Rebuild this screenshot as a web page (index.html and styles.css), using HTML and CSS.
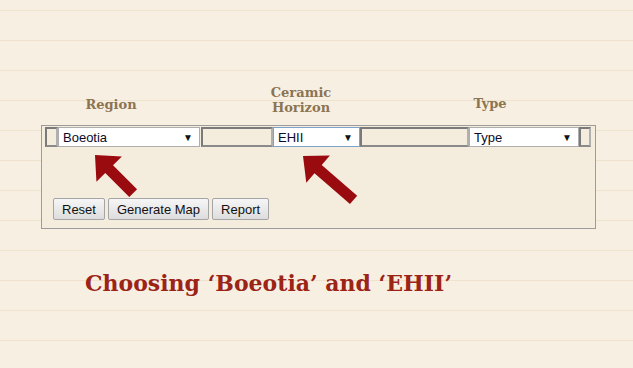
FILE: index.html
```html
<!DOCTYPE html>
<html lang="en">
<head>
    <meta charset="UTF-8">
    <title>Choosing Boeotia and EHII</title>
    <link rel="stylesheet" href="styles.css">
</head>
<body>
    <div class="sheet">
        <div class="labels">
            <div class="label label-region">Region</div>
            <div class="label label-horizon">
                <div>Ceramic</div>
                <div>Horizon</div>
            </div>
            <div class="label label-type">Type</div>
        </div>

        <div class="panel">
            <div class="filter-row">
                <div class="cell cell-edge"></div>
                <div class="picker picker-region">Boeotia<span class="caret">&#9660;</span></div>
                <div class="cell cell-gap1"></div>
                <div class="picker picker-horizon focused">EHII<span class="caret">&#9660;</span></div>
                <div class="cell cell-gap2"></div>
                <div class="picker picker-type">Type<span class="caret">&#9660;</span></div>
                <div class="cell cell-end"></div>
            </div>
            <div class="controls">
                <button>Reset</button>
                <button>Generate Map</button>
                <button>Report</button>
            </div>
        </div>

        <h2 class="caption">Choosing &lsquo;Boeotia&rsquo; and &lsquo;EHII&rsquo;</h2>
    </div>

    <!-- annotation arrows drawn over the form -->
    <svg class="arrows" width="633" height="368" viewBox="0 0 633 368">
        <g transform="translate(95,155) rotate(45)">
            <polygon points="0,0 20,-18 20,-5.5 54,-5.5 54,5.5 20,5.5 20,18"/>
        </g>
        <g transform="translate(303,156) rotate(41)">
            <polygon points="0,0 20,-18 20,-5.5 67,-5.5 67,5.5 20,5.5 20,18"/>
        </g>
    </svg>
</body>
</html>
```

FILE: styles.css
```css
body {
    margin: 0;
    min-height: 368px;
    background: repeating-linear-gradient(#f8efe3 0 10px, #efe3cd 10px 11px, #f8efe3 11px 30px);
    position: relative;
}
.sheet {
    margin: 0 0 0 41px;
    padding-top: 85px;
    width: 555px;
}
.labels {
    display: flex;
    align-items: flex-end;
    margin-bottom: 10px;
}
.label {
    font-family: "DejaVu Serif", serif;
    font-weight: bold;
    font-size: 13px;
    line-height: 15px;
    color: #8c7452;
    text-align: center;
}
.label-region {
    width: 140px;
    margin-bottom: 3px;
}
.label-horizon {
    width: 240px;
}
.label-type {
    width: 138px;
    margin-bottom: 4px;
}
.panel {
    border: 1px solid #9c9c9c;
    background: #f4ecdc;
    padding: 1px 3px 8px 3px;
}
.filter-row {
    display: flex;
    height: 20px;
}
.cell {
    box-sizing: border-box;
    height: 20px;
    border: 2px solid;
    border-color: #7a7a7a #b0b0b0 #8a8a8a #7a7a7a;
    background: #f4ecdc;
}
.cell-edge { width: 13px; }
.cell-gap1 { width: 72px; margin-left: 1px; }
.cell-gap2 { width: 109px; }
.cell-end { width: 12px; }
.picker {
    box-sizing: border-box;
    height: 20px;
    display: flex;
    align-items: center;
    justify-content: space-between;
    padding: 0 6px 0 4px;
    background: #fff;
    border: 1px solid #adadad;
    font-family: "Liberation Sans", Arial, sans-serif;
    font-size: 13px;
    color: #0b0b2a;
}
.picker-region { width: 142px; }
.picker-horizon { width: 87px; }
.picker-type { width: 110px; }
.focused {
    border-color: #7da2ce;
}
.caret {
    font-size: 10px;
    color: #111;
}
.controls {
    display: flex;
    gap: 3px;
    margin-top: 51px;
    padding-left: 8px;
}
button {
    height: 22px;
    padding: 0 8px;
    font-family: "Liberation Sans", Arial, sans-serif;
    font-size: 13px;
    color: #111;
    background: linear-gradient(#f6f6f6, #dddddd);
    border: 1px solid #a5a5a5;
    border-radius: 2px;
}
.caption {
    margin: 41px 0 0 44px;
    font-family: "DejaVu Serif", serif;
    font-weight: bold;
    font-size: 22px;
    line-height: 26px;
    color: #9b2417;
}
.arrows {
    position: absolute;
    left: 0;
    top: 0;
    fill: #9a0b10;
}
```
